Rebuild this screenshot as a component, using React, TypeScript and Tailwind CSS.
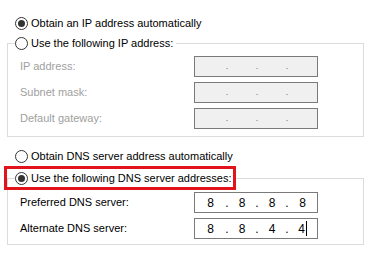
import React from 'react';

type Ip = string[] | null;

function Radio({ checked }: { checked?: boolean }) {
  return (
    <span className="w-[13px] h-[13px] rounded-full border border-[#333333] bg-white flex items-center justify-center shrink-0">
      {checked && <span className="w-[7px] h-[7px] rounded-full bg-[#333333]" />}
    </span>
  );
}

function RadioRow({ label, checked }: { label: string; checked?: boolean }) {
  return (
    <span className="flex items-center gap-[3px] h-[16px] text-black">
      <Radio checked={checked} />
      <span className="leading-none">{label}</span>
    </span>
  );
}

function IpField({ parts, caret }: { parts: Ip; caret?: boolean }) {
  const enabled = parts !== null;
  const p = parts ?? ['', '', '', ''];
  const dot = (
    <span className={`w-[2px] flex justify-center ${enabled ? 'text-black' : 'text-[#6d6d6d] text-[9px]'}`}>.</span>
  );
  return (
    <div
      className={`w-[124px] h-[21px] border border-[#7a7a7a] flex items-center ${
        enabled ? 'bg-white text-black text-[12px]' : 'bg-[#f0f0f0]'
      }`}
    >
      <span className="w-[31px] text-center">{p[0]}</span>
      {dot}
      <span className="w-[28px] text-center">{p[1]}</span>
      {dot}
      <span className="w-[28px] text-center">{p[2]}</span>
      {dot}
      <span className="flex-1 flex justify-center items-center">
        {p[3]}
        {caret && <span className="w-px h-[15px] bg-black ml-[1px]" />}
      </span>
    </div>
  );
}

function FieldRow({ label, parts, caret }: { label: string; parts: Ip; caret?: boolean }) {
  return (
    <div className="flex items-center h-[21px]">
      <span className={`w-[174px] ${parts ? 'text-black' : 'text-[#a0a0a0]'}`}>{label}</span>
      <IpField parts={parts} caret={caret} />
    </div>
  );
}

export default function App() {
  return (
    <div
      className="relative w-[371px] h-[257px] bg-white overflow-hidden text-[11px] leading-none"
      style={{ fontFamily: '"Liberation Sans", Arial, sans-serif' }}
    >
      <div className="pt-[15px] pl-[15px]">
        <RadioRow label="Obtain an IP address automatically" checked />
      </div>

      <fieldset className="ml-[7px] mt-[4px] w-[357px] border border-[#dcdcdc] pl-[12px] pb-[7px]">
        <legend className="ml-[-5px] pr-[3px]">
          <RadioRow label="Use the following IP address:" />
        </legend>
        <div className="flex flex-col gap-[5px] pt-[5px]">
          <FieldRow label="IP address:" parts={null} />
          <FieldRow label="Subnet mask:" parts={null} />
          <FieldRow label="Default gateway:" parts={null} />
        </div>
      </fieldset>

      <div className="pt-[11px] pl-[15px]">
        <RadioRow label="Obtain DNS server address automatically" />
      </div>

      <fieldset className="ml-[7px] mt-[6px] w-[357px] border border-[#dcdcdc] pl-[12px] pb-[5px]">
        <legend className="ml-[-5px] pr-[3px]">
          <RadioRow label="Use the following DNS server addresses:" checked />
        </legend>
        <div className="flex flex-col gap-[5px] pt-[6px]">
          <FieldRow label="Preferred DNS server:" parts={['8', '8', '8', '8']} />
          <FieldRow label="Alternate DNS server:" parts={['8', '8', '4', '4']} caret />
        </div>
      </fieldset>

      {/* annotation box */}
      <div className="absolute left-[4px] top-[166px] w-[232px] h-[24px] border-[3px] border-[#e3131b]" />
    </div>
  );
}
